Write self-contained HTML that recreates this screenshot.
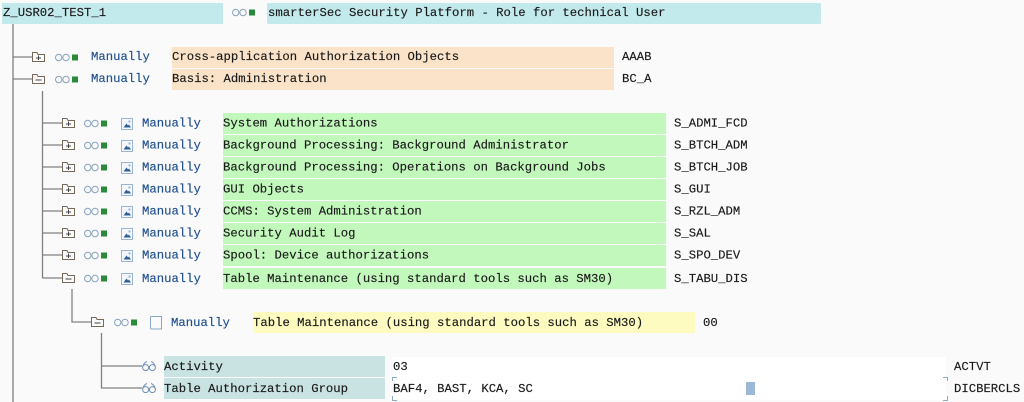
<!DOCTYPE html>
<html><head><meta charset="utf-8"><style>
html,body{margin:0;padding:0;background:#fafafa;width:1024px;height:402px;overflow:hidden}
svg{display:block}
text{font-family:"Liberation Mono",monospace;font-size:12.27px;fill:#1a1a1a;stroke:#1a1a1a;stroke-width:.15px;white-space:pre}
.m{fill:#1f4f8f;stroke:#1f4f8f}
.l{stroke:#808080;stroke-width:1.3;fill:none}
</style></head><body>
<svg width="1024" height="402" viewBox="0 0 1024 402" xmlns="http://www.w3.org/2000/svg">
<defs>
<g id="fp" fill="none" stroke="#75695a" stroke-width="1"><path d="M.5 10.500V1.500h4.500l1 2h6.500v7z"/><path d="M6.500 4.500v4.500M4 7h5" stroke="#444"/></g>
<g id="fm" fill="none" stroke="#75695a" stroke-width="1"><path d="M.5 10.500V1.500h4.500l1 2h6.500v7z"/><path d="M3.500 7h6" stroke="#444"/></g>
<g id="st"><circle cx="3.700" cy="3.500" r="3.200" fill="none" stroke="#8aa2bd" stroke-width="1"/><circle cx="11" cy="3.500" r="3.200" fill="none" stroke="#8aa2bd" stroke-width="1"/><rect x="17" y=".5" width="6" height="6" fill="#2a8a3a"/></g>
<g id="im"><rect x=".5" y=".5" width="11" height="11" fill="#f4f7fb" stroke="#9ab5d2"/><path d="M2.500 9.500l3-4 1.500 2 1-1 2 3z" fill="#2f5f95"/><rect x="7.500" y="2.500" width="2" height="2" fill="#9ab5d2"/></g>
<g id="gl" fill="none" stroke="#6f90b5" stroke-width="1"><circle cx="3.600" cy="7.600" r="3"/><circle cx="10.400" cy="7.600" r="3"/><path d="M6.600 7.600q.4-.8.800 0M.8 6.500Q2 2.500 5 1.500M13.200 6.500Q12 2.500 9 1.500"/></g>
</defs>

<!-- backgrounds -->
<rect x="2" y="3" width="221" height="21" fill="#c2e9ec"/>
<rect x="267" y="3" width="554" height="21" rx="1" fill="#c2e9ec"/>
<rect x="172" y="47" width="442" height="21" fill="#fae3c8"/>
<rect x="172" y="69" width="442" height="21" fill="#fae3c8"/>
<rect x="223" y="113" width="443" height="21" fill="#c3f8bd"/>
<rect x="223" y="135" width="443" height="21" fill="#c3f8bd"/>
<rect x="223" y="157" width="443" height="21" fill="#c3f8bd"/>
<rect x="223" y="179" width="443" height="21" fill="#c3f8bd"/>
<rect x="223" y="201" width="443" height="21" fill="#c3f8bd"/>
<rect x="223" y="223" width="443" height="21" fill="#c3f8bd"/>
<rect x="223" y="245" width="443" height="21" fill="#c3f8bd"/>
<rect x="223" y="268" width="443" height="21" fill="#c3f8bd"/>
<rect x="253" y="312" width="442" height="21" fill="#fdfbc0"/>
<rect x="164" y="356" width="221" height="21" fill="#c9e2e2"/>
<rect x="164" y="378" width="221" height="21" fill="#c9e2e2"/>
<rect x="392" y="357" width="554" height="21" fill="#fff"/>
<rect x="392" y="378" width="554" height="22" fill="#fff"/>

<!-- tree lines -->
<path class="l" d="M13 24V402M13 57H32M13 79H32"/>
<path class="l" d="M42.500 91V278M42.500 123H62M42.500 145H62M42.500 167H62M42.500 189H62M42.500 211H62M42.500 233H62M42.500 255H62M42.500 278H62"/>
<path class="l" d="M72 289V322H91"/>
<path class="l" d="M101.500 333V388H142M101.500 366H142"/>

<!-- field bracket -->
<path d="M392.500 381v-3.500h4.500M392.500 396v4.500h4.500M947.500 381v-3.500h-4.500M947.500 396v4.500h-4.500" fill="none" stroke="#8fa9c4"/>
<rect x="746" y="382" width="9" height="13" fill="#9db7d6"/>

<!-- header -->
<text x="3" y="16">Z_USR02_TEST_1</text>
<use href="#st" x="232" y="9"/>
<text x="268" y="16">smarterSec Security Platform - Role for technical User</text>

<!-- level 1 -->
<use href="#fp" x="32" y="51"/><use href="#st" x="55" y="54"/>
<text class="m" x="91" y="60.200">Manually</text>
<text x="172" y="60.200">Cross-application Authorization Objects</text>
<text x="622" y="60.200">AAAB</text>

<use href="#fm" x="32" y="73"/><use href="#st" x="55" y="76"/>
<text class="m" x="91" y="82.200">Manually</text>
<text x="172" y="82.200">Basis: Administration</text>
<text x="622" y="82.200">BC_A</text>

<!-- level 2 -->
<use href="#fp" x="62" y="117"/><use href="#st" x="84" y="120"/><use href="#im" x="121" y="118"/>
<text class="m" x="142" y="126.500">Manually</text><text x="223" y="126.500">System Authorizations</text><text x="674" y="126.500">S_ADMI_FCD</text>

<use href="#fp" x="62" y="139"/><use href="#st" x="84" y="142"/><use href="#im" x="121" y="140"/>
<text class="m" x="142" y="148.500">Manually</text><text x="223" y="148.500">Background Processing: Background Administrator</text><text x="674" y="148.500">S_BTCH_ADM</text>

<use href="#fp" x="62" y="161"/><use href="#st" x="84" y="164"/><use href="#im" x="121" y="162"/>
<text class="m" x="142" y="170.500">Manually</text><text x="223" y="170.500">Background Processing: Operations on Background Jobs</text><text x="674" y="170.500">S_BTCH_JOB</text>

<use href="#fp" x="62" y="183"/><use href="#st" x="84" y="186"/><use href="#im" x="121" y="184"/>
<text class="m" x="142" y="192.500">Manually</text><text x="223" y="192.500">GUI Objects</text><text x="674" y="192.500">S_GUI</text>

<use href="#fp" x="62" y="205"/><use href="#st" x="84" y="208"/><use href="#im" x="121" y="206"/>
<text class="m" x="142" y="214.500">Manually</text><text x="223" y="214.500">CCMS: System Administration</text><text x="674" y="214.500">S_RZL_ADM</text>

<use href="#fp" x="62" y="227"/><use href="#st" x="84" y="230"/><use href="#im" x="121" y="228"/>
<text class="m" x="142" y="236.500">Manually</text><text x="223" y="236.500">Security Audit Log</text><text x="674" y="236.500">S_SAL</text>

<use href="#fp" x="62" y="249"/><use href="#st" x="84" y="252"/><use href="#im" x="121" y="250"/>
<text class="m" x="142" y="258.500">Manually</text><text x="223" y="258.500">Spool: Device authorizations</text><text x="674" y="258.500">S_SPO_DEV</text>

<use href="#fm" x="62" y="272"/><use href="#st" x="84" y="275"/><use href="#im" x="121" y="273"/>
<text class="m" x="142" y="282">Manually</text><text x="223" y="282">Table Maintenance (using standard tools such as SM30)</text><text x="674" y="282">S_TABU_DIS</text>

<!-- level 3 -->
<use href="#fm" x="91" y="316"/><use href="#st" x="114" y="319"/>
<path d="M150.500 317.500q0-1 1-1h10v12.500h-10q-1 0-1-1z" fill="#fafafa" stroke="#8aa6c6"/>
<text class="m" x="171" y="326">Manually</text>
<text x="253" y="326">Table Maintenance (using standard tools such as SM30)</text>
<text x="703" y="326">00</text>

<!-- level 4 -->
<use href="#gl" x="142" y="360"/>
<text x="164" y="370">Activity</text>
<text x="393" y="370">03</text>
<text x="954" y="370">ACTVT</text>
<use href="#gl" x="142" y="382"/>
<text x="164" y="392">Table Authorization Group</text>
<text x="393" y="392">BAF4, BAST, KCA, SC</text>
<text x="954" y="392">DICBERCLS</text>
</svg>
</body></html>
